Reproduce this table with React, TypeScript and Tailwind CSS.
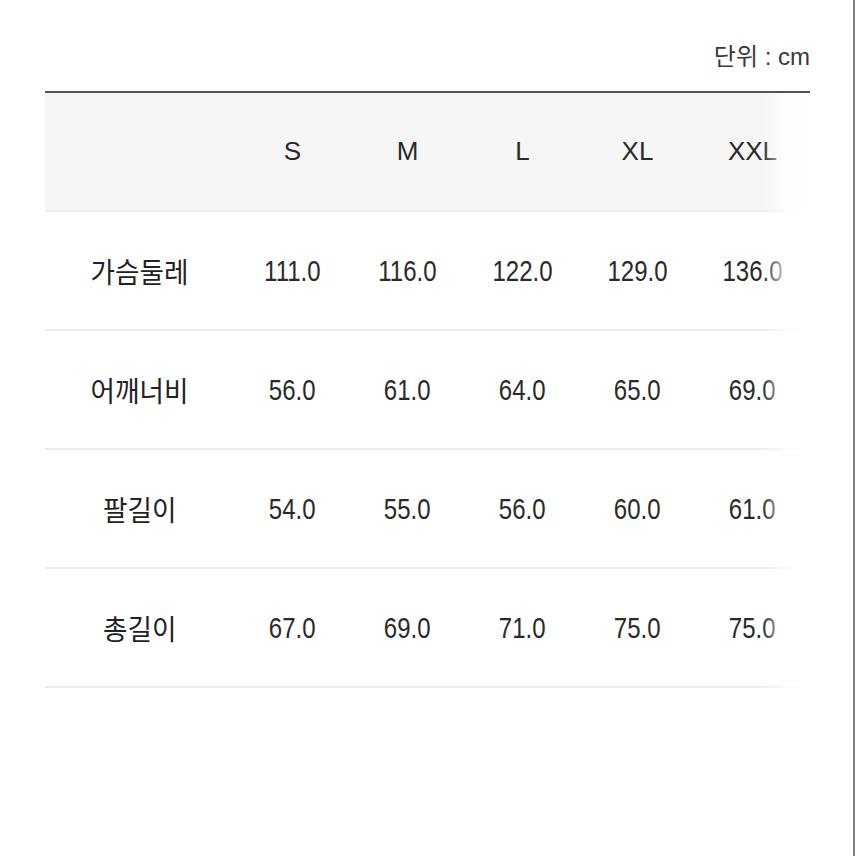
import React from 'react';

const sizes = ['S', 'M', 'L', 'XL', 'XXL'];

const rows: { label: string; values: string[] }[] = [
  { label: '가슴둘레', values: ['111.0', '116.0', '122.0', '129.0', '136.0'] },
  { label: '어깨너비', values: ['56.0', '61.0', '64.0', '65.0', '69.0'] },
  { label: '팔길이', values: ['54.0', '55.0', '56.0', '60.0', '61.0'] },
  { label: '총길이', values: ['67.0', '69.0', '71.0', '75.0', '75.0'] },
];

const latin = { fontFamily: '"Liberation Sans", Arial, sans-serif' };
const korean = { fontFamily: '"Noto Sans CJK KR", sans-serif' };

export default function App() {
  return (
    <div
      className="relative w-[856px] h-[856px] bg-white text-[#222] overflow-hidden"
      style={{ fontFamily: '"Liberation Sans", "Noto Sans CJK KR", sans-serif' }}
    >
      <div className="pl-[45px] pr-[46px] pt-[39px]">
        <div className="text-right text-[24px] leading-[32px] text-[#3a3a3a]">
          <span style={korean}>단위</span>
          <span style={latin}> : cm</span>
        </div>

        <div className="mt-[18px] border-t-2 border-[#555]">
          <div className="relative">
            {/* header */}
            <div className="grid grid-cols-[190px_repeat(5,115px)] h-[119px] bg-[#f6f6f6] border-b-2 border-[#ececec] items-center">
              <div />
              {sizes.map((s) => (
                <div key={s} className="text-center text-[26px] text-[#2a2a2a]" style={latin}>
                  {s}
                </div>
              ))}
            </div>

            {rows.map((r) => (
              <div
                key={r.label}
                className="grid grid-cols-[190px_repeat(5,115px)] h-[119px] border-b-2 border-[#ececec] items-center"
              >
                <div className="text-center text-[28px]" style={korean}>
                  <span className="inline-block scale-x-[0.95]">{r.label}</span>
                </div>
                {r.values.map((v, i) => (
                  <div key={i} className="text-center text-[30px] text-[#2a2a2a]" style={latin}>
                    <span className="inline-block scale-x-[0.8]">{v}</span>
                  </div>
                ))}
              </div>
            ))}

            {/* right scroll fade */}
            <div className="absolute top-0 bottom-0 right-0 w-[48px] bg-gradient-to-r from-white/0 via-white/80 to-white" />
          </div>
        </div>
      </div>

      {/* scrollbar edge */}
      <div className="absolute top-0 bottom-0 right-[1px] w-[2px] bg-[#808080]" />
    </div>
  );
}
